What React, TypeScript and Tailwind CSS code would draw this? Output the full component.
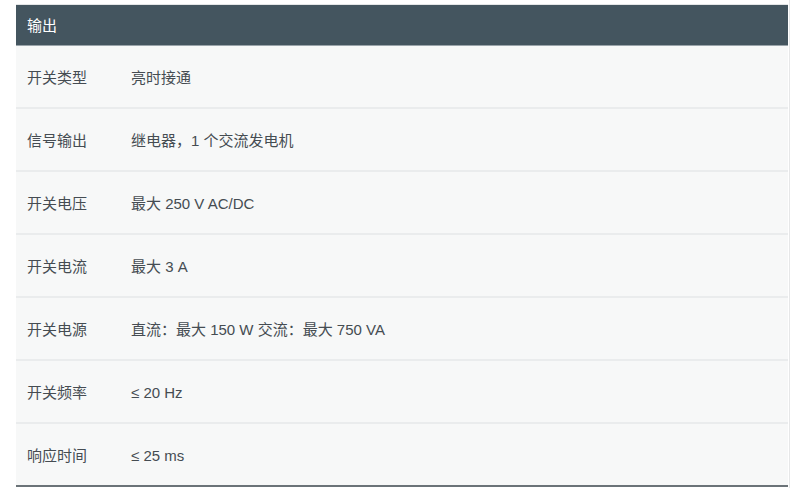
const rows = [
  ["开关类型", "亮时接通"],
  ["信号输出", "继电器，1 个交流发电机"],
  ["开关电压", "最大 250 V AC/DC"],
  ["开关电流", "最大 3 A"],
  ["开关电源", "直流：最大 150 W 交流：最大 750 VA"],
  ["开关频率", "≤ 20 Hz"],
  ["响应时间", "≤ 25 ms"],
];

const App = () => {
  return (
    <div className="w-[800px] h-[488px] overflow-hidden bg-white font-['Liberation_Sans','Noto_Sans_CJK_SC',sans-serif]">
      <div className="w-[790px] h-full border-r border-[#e6e7e8] pt-[4px]">
        <div className="ml-4 w-[772px] border-t border-[#e4e6e7]">
          <div className="h-[41px] bg-[#44555f] border-b border-[#9aa4aa] flex items-center px-[11px] pt-[3px] text-[15px] text-white">
            输出
          </div>
          {rows.map(([label, value], i) => (
            <div
              key={label}
              className={
                "h-[63px] bg-[#f7f8f8] flex items-center pt-[4px] text-[15px] text-[#454c52] " +
                (i < rows.length - 1 ? "border-b-2 border-[#eaeced]" : "border-b-2 border-[#6b7378]")
              }
            >
              <div className="w-[115px] pl-[11px] shrink-0">{label}</div>
              <div>{value}</div>
            </div>
          ))}
        </div>
      </div>
    </div>
  );
};

export default App;
